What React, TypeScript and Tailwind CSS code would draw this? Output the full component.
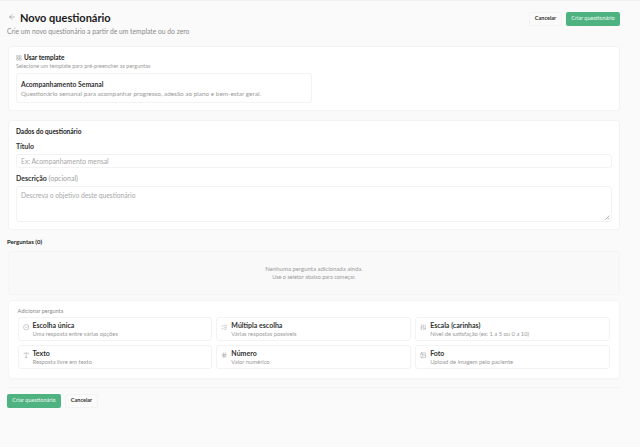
import { ArrowLeft, CircleCheck, Hash, Image, LayoutGrid, ListChecks, SlidersVertical, Type } from "lucide-react";

const font = "font-['Lato','Inter',sans-serif]";

const options = [
  { icon: CircleCheck, title: "Escolha única", text: "Uma resposta entre várias opções" },
  { icon: ListChecks, title: "Múltipla escolha", text: "Várias respostas possíveis" },
  { icon: SlidersVertical, title: "Escala (carinhas)", text: "Nível de satisfação (ex: 1 a 5 ou 0 a 10)" },
  { icon: Type, title: "Texto", text: "Resposta livre em texto" },
  { icon: Hash, title: "Número", text: "Valor numérico" },
  { icon: Image, title: "Foto", text: "Upload de imagem pelo paciente" },
];

function CreateButton() {
  return (
    <button className="h-[14px] w-[54px] rounded-[2px] bg-[#4fb281] text-[5.5px] font-medium leading-none text-[#e4f5ec]">
      Criar questionário
    </button>
  );
}

function CancelButton() {
  return (
    <button className="h-[14px] w-[33px] rounded-[2px] border border-[#f3f3f3] bg-[#fafafa] text-[5.5px] font-bold leading-none text-[#333333]">
      Cancelar
    </button>
  );
}

export default function App() {
  return (
    <div className={`${font} h-[447px] w-[640px] overflow-hidden border-t border-[#f2f2f2] bg-[#fafafa] pl-[7px] pr-[20px] text-[#1c1c1c]`}>
      <header className="flex h-[45px] items-start justify-between pt-[9px]">
        <div>
          <div className="flex h-[14px] items-center gap-[4px]">
            <ArrowLeft className="ml-[1px] h-[8px] w-[8px] text-[#777777]" strokeWidth={1.5} />
            <h1 className="text-[11px] font-bold leading-none text-[#1a1a1a]">Novo questionário</h1>
          </div>
          <p className="mt-[1px] text-[6.75px] leading-[12px] text-[#8a8a8a]">Crie um novo questionário a partir de um template ou do zero</p>
        </div>
        <div className="mt-[2px] flex gap-[4px]">
          <CancelButton />
          <CreateButton />
        </div>
      </header>

      <section className="ml-[1px] h-[65px] rounded-[3px] border border-[#f3f3f3] bg-white pl-[7px] pr-[8px] pt-[7px]">
        <div className="flex h-[8px] items-center gap-[2px]">
          <LayoutGrid className="h-[6px] w-[6px] text-[#888888]" strokeWidth={1.5} />
          <span className="text-[6.5px] font-bold leading-none text-[#222222]">Usar template</span>
        </div>
        <p className="mt-[1px] text-[5.5px] leading-[6px] text-[#999999]">Selecione um template para pré-preencher as perguntas</p>
        <div className="mt-[4px] h-[30px] w-[296px] rounded-[3px] border border-[#f3f3f3] pl-[4px] pt-[6px]">
          <div className="text-[6.8px] font-bold leading-[9px] text-[#333333]">Acompanhamento Semanal</div>
          <div className="mt-[1px] text-[6.4px] leading-[8px] text-[#999999]">Questionário semanal para acompanhar progresso, adesão ao plano e bem-estar geral.</div>
        </div>
      </section>

      <section className="ml-[1px] mt-[9px] h-[110px] rounded-[3px] border border-[#f3f3f3] bg-white px-[7px] pt-[7px]">
        <h2 className="text-[6.5px] font-bold leading-[8px] text-[#222222]">Dados do questionário</h2>
        <label className="mt-[6px] block text-[7px] font-bold leading-[9px] text-[#333333]">Título</label>
        <div className="mt-[3px] flex h-[14px] items-center rounded-[3px] border border-[#f3f3f3] pl-[4px] text-[6.8px] text-[#a8a8a8]">Ex: Acompanhamento mensal</div>
        <label className="mt-[6px] block text-[7px] font-bold leading-[9px] text-[#333333]">
          Descrição <span className="font-normal text-[#a0a0a0]">(opcional)</span>
        </label>
        <div className="relative mt-[3px] h-[36px] rounded-[3px] border border-[#f3f3f3] pl-[4px] pt-[4px] text-[6.7px] leading-[8px] text-[#a8a8a8]">
          Descreva o objetivo deste questionário
          <svg className="absolute bottom-[1px] right-[1px] h-[5px] w-[5px]" viewBox="0 0 5 5" stroke="#888888" strokeWidth="0.6">
            <path d="M0.5 4.5 4.5 0.5M2.8 4.5 4.5 2.8" />
          </svg>
        </div>
      </section>

      <h2 className="mt-[8px] text-[6px] font-bold leading-[8px] text-[#222222]">Perguntas (0)</h2>

      <div className="ml-[1px] mt-[5px] flex h-[44px] flex-col items-center justify-center rounded-[3px] border border-[#f5f5f5] bg-[#f9f9f9] text-[#999999]">
        <p className="text-[6px] leading-[9px]">Nenhuma pergunta adicionada ainda.</p>
        <p className="text-[5.5px] leading-[9px]">Use o seletor abaixo para começar.</p>
      </div>

      <section className="ml-[1px] mt-[5px] h-[79px] rounded-[4px] border border-[#f5f5f5] bg-white pl-[8.5px] pr-[9px] pt-[6px] shadow-[0_1px_2px_rgba(0,0,0,0.02)]">
        <p className="text-[5.5px] leading-[8px] text-[#888888]">Adicionar pergunta</p>
        <div className="mt-[2px] grid grid-cols-3 gap-x-[4px] gap-y-[4px]">
          {options.map(({ icon: Icon, title, text }) => (
            <div key={title} className="flex h-[24px] items-center gap-[3.5px] rounded-[3px] border border-[#f3f3f3] pl-[4px]">
              <Icon className="mb-[3px] h-[6.5px] w-[6.5px] shrink-0 text-[#888888]" strokeWidth={1.5} />
              <div>
                <div className="text-[7px] font-bold leading-[8px] text-[#333333]">{title}</div>
                <div className="mt-[0.5px] text-[5.8px] leading-[7px] text-[#999999]">{text}</div>
              </div>
            </div>
          ))}
        </div>
      </section>

      <div className="ml-[1px] mt-[8px] border-t border-[#f3f3f3]" />

      <div className="mt-[6px] flex gap-[4px]">
        <CreateButton />
        <CancelButton />
      </div>
    </div>
  );
}
